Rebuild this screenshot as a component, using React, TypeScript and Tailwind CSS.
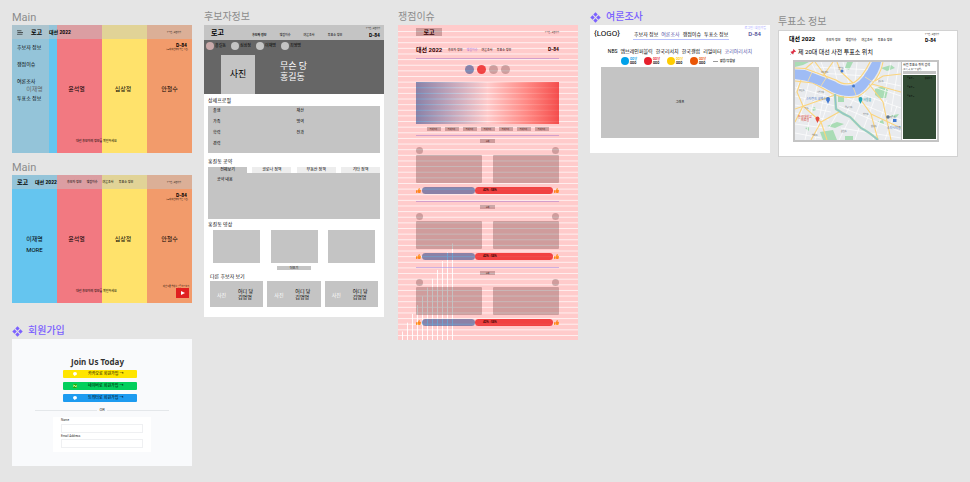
import type { ReactNode } from "react";
import { FaThumbsUp } from "react-icons/fa";

const NAV = ["후보자 정보", "쟁점이슈", "여론조사", "투표소 정보"];

function ComponentMark() {
  return (
    <svg viewBox="0 0 12 12" className="h-[11px] w-[11px] shrink-0 fill-[#7b61ff]" aria-hidden="true">
      <path d="M6 0.3 8.4 2.8 6 5.2 3.6 2.8Z M6 6.8 8.4 9.2 6 11.7 3.6 9.2Z M2.8 3.6 5.2 6 2.8 8.4 0.3 6Z M9.2 3.6 11.7 6 9.2 8.4 6.8 6Z" />
    </svg>
  );
}

function Title({ children, marked = false }: { children: ReactNode; marked?: boolean }) {
  return marked ? (
    <h2 className="flex h-4 items-center gap-[5px] text-[10px] font-medium whitespace-nowrap text-[#7b61ff]">
      <ComponentMark />
      {children}
    </h2>
  ) : (
    <h2 className="flex h-4 items-center text-[10px] whitespace-nowrap text-[#8c8c8c]">{children}</h2>
  );
}

function Auth() {
  return (
    <a href="#login" className="block text-[2px]">
      로그인 | 회원가입
    </a>
  );
}

const CANDIDATES = [
  { name: "이재명", bg: "bg-[#65c5ef]", pad: "" },
  { name: "윤석열", bg: "bg-[#f27981]", pad: "pr-[6px]" },
  { name: "심상정", bg: "bg-[#ffe26b]", pad: "pr-[3px]" },
  { name: "안철수", bg: "bg-[#f29b6b]", pad: "" },
];

function MainFrame({ open = false }: { open?: boolean }) {
  return (
    <section className="relative grid h-32 overflow-hidden text-black">
      <div className="col-start-1 row-start-1 grid grid-cols-4">
        {CANDIDATES.map((c) => (
          <div
            key={c.name}
            className={`flex flex-col items-center gap-[5px] pt-[61px] text-[6px] ${c.bg} ${c.pad}`}
          >
            <p>{c.name}</p>
            {!open && c.name === "이재명" && <a href="#more">MORE</a>}
          </div>
        ))}
      </div>
      {open && (
        <nav className="absolute inset-y-0 left-0 flex w-[37px] flex-col gap-3 bg-[#c4c4c4]/50 pt-[20px] pl-[5px] text-[5px] whitespace-nowrap">
          {NAV.map((n) => (
            <a key={n} href="#menu">
              {n}
            </a>
          ))}
        </nav>
      )}
      <div className="relative col-start-1 row-start-1 flex flex-col whitespace-nowrap">
        <header className="flex h-[14px] shrink-0 items-center bg-[#c4c4c4]/50 pr-[11px]">
          {open ? (
            <>
              <button aria-label="메뉴" className="ml-[5px] w-[14px]">
                <svg viewBox="0 0 12 10" className="h-[5px] w-[6px] stroke-[#222]" aria-hidden="true">
                  <path d="M0 1.5H9M1 5H12M0 8.5H11" strokeWidth="1.4" />
                </svg>
              </button>
              <b className="w-[18px] text-[6px]">로고</b>
              <b className="text-[5px]">대선 2022</b>
            </>
          ) : (
            <>
              <b className="ml-[5px] w-[18px] text-[6px]">로고</b>
              <b className="w-8 text-[5px]">대선 2022</b>
              <nav className="flex gap-[5px] pt-px text-[3px]">
                {NAV.map((n) => (
                  <a key={n} href="#menu">
                    {n}
                  </a>
                ))}
              </nav>
            </>
          )}
          <div className="ml-auto">
            <Auth />
          </div>
        </header>
        <div className="flex flex-col items-end pt-[4px] pr-[4px]">
          <b className="pr-px text-[5px]">D-84</b>
          <p className="text-[2px]">(20대 대선까지 남은 시간)</p>
        </div>
        <div className="mt-auto mb-[10px] flex pl-16">
          <p className="text-[3px]">대선 후보자의 정보를 확인하세요</p>
        </div>
      </div>
      {!open && (
        <div className="absolute right-[3px] bottom-[5px] flex flex-col items-end gap-px whitespace-nowrap">
          <p className="text-[2px]">대선 토론 영상을 유튜브로 보기</p>
          <button aria-label="영상 재생" className="flex h-[10px] w-[13px] items-center justify-center bg-[#e02020]">
            <svg viewBox="0 0 10 10" className="h-[4px] w-[4px] fill-white" aria-hidden="true">
              <path d="M0 0 10 5 0 10Z" />
            </svg>
          </button>
        </div>
      )}
    </section>
  );
}

function SignIcon({ kind }: { kind: string }) {
  return (
    <svg viewBox="0 0 10 10" className="h-[4px] w-[4px] shrink-0" aria-hidden="true">
      {kind === "naver" ? (
        <>
          <rect width="10" height="10" fill="#17a800" />
          <path d="M2 8V2L8 8V2" stroke="#d8ffb0" strokeWidth="2" fill="none" />
        </>
      ) : (
        <>
          <ellipse cx="5" cy="4.4" rx="5" ry="4.2" fill="#fff" />
          <path d="M3 7 3 10 6 8Z" fill="#fff" />
        </>
      )}
    </svg>
  );
}

const SIGN_UP = [
  { kind: "kakao", text: "카카오로 회원가입 →", style: "bg-[#ffe500]" },
  { kind: "naver", text: "네이버로 회원가입 →", style: "bg-[#03cf5d]" },
  { kind: "twitter", text: "트위터로 회원가입 →", style: "bg-[#1d9bf0]" },
];

function JoinFrame() {
  return (
    <section className="flex h-[127px] flex-col items-center bg-[#f9fafc] pt-[19px] whitespace-nowrap text-[#333]">
      <h1 className="mr-[9px] text-[8px] font-bold [font-family:'Noto_Sans',sans-serif]">Join Us Today</h1>
      <div className="mt-[4px] mr-[4px] flex w-[74px] flex-col gap-[4px]">
        {SIGN_UP.map((s) => (
          <button
            key={s.kind}
            className={`flex h-[8px] items-center gap-[11px] rounded-[1px] pl-[10px] text-[4px] text-black ${s.style}`}
          >
            <SignIcon kind={s.kind} />
            {s.text}
          </button>
        ))}
      </div>
      <div className="mt-[6px] flex w-[134px] items-center gap-[2px] text-[4px]">
        <hr className="grow border-[#e4e7ea]" />
        OR
        <hr className="grow border-[#e4e7ea]" />
      </div>
      <form className="mt-[5px] flex w-[98px] flex-col bg-white px-[8px] pt-[2px] pb-[4px] text-[3px]">
        <label htmlFor="join-name">Name</label>
        <input id="join-name" className="mt-[2px] h-[9px] w-full border border-[#eff0f2]" />
        <label htmlFor="join-email" className="mt-[2px]">
          Email Address
        </label>
        <input id="join-email" className="mt-px h-[9px] w-full border border-[#eff0f2]" />
      </form>
    </section>
  );
}

const PEOPLE = [
  { name: "홍길동", dot: "bg-[#c9a9a9]" },
  { name: "심상정", dot: "bg-[#c4c4c4]" },
  { name: "이재명", dot: "bg-[#c4c4c4]" },
  { name: "최영명", dot: "bg-[#c4c4c4]" },
];

function CandidateFrame() {
  return (
    <section className="flex h-[292px] flex-col bg-white whitespace-nowrap text-black">
      <header className="flex h-[15px] shrink-0 bg-[#c4c4c4] pr-[4px] pl-[7px]">
        <b className="w-[41px] pt-[5px] text-[7px]">로고</b>
        <nav className="flex gap-[13px] pt-[9px] text-[3px]">
          {NAV.map((n, i) => (
            <a key={n} href="#menu" className={i === 0 ? "font-bold" : ""}>
              {n}
            </a>
          ))}
        </nav>
        <div className="ml-auto flex flex-col items-end gap-[4px] pt-[2px]">
          <Auth />
          <b className="text-[5px]">D-84</b>
        </div>
      </header>
      <div className="flex h-[54px] shrink-0 flex-col bg-[#666]">
        <div className="flex pt-[2px] pl-[2px] text-[4px]">
          {PEOPLE.map((p) => (
            <div key={p.name} className="flex w-[25px] items-center gap-px">
              <span className={`size-[8px] shrink-0 rounded-full ${p.dot}`} />
              {p.name}
            </div>
          ))}
        </div>
        <div className="flex grow items-end pt-[5px] pl-[17px]">
          <div className="flex h-full w-[34px] items-center justify-center bg-[#c4c4c4] text-[9px]">사진</div>
          <div className="flex h-full flex-col gap-[2px] pt-[7px] pl-[25px] text-[9px] text-white">
            <p>무슨 당</p>
            <p>홍길동</p>
          </div>
        </div>
      </div>
      <div className="flex flex-col px-[4px] text-[5px]">
        <h3 className="pt-[4px]">상세프로필</h3>
        <div className="mt-[3px] grid h-[47px] grid-cols-2 content-start gap-y-[7px] bg-[#c4c4c4] pt-[3px] pl-[5px] text-[4px]">
          <p>출생</p>
          <p>재산</p>
          <p>가족</p>
          <p>병역</p>
          <p>학력</p>
          <p>전과</p>
          <p>경력</p>
        </div>
        <h3 className="pt-[6px]">홍길동 공약</h3>
        <div className="mt-[3px] flex justify-between text-[4px]">
          {["전체보기", "코로나 정책", "부동산 정책", "기타 정책"].map((t, i) => (
            <button key={t} className={`h-[6px] w-[39px] ${i === 0 ? "bg-[#c4c4c4]" : "bg-[#ededed]"}`}>
              {t}
            </button>
          ))}
        </div>
        <div className="h-[46px] bg-[#c4c4c4] pt-[5px] pl-[9px] text-[4px]">공약 내용</div>
        <h3 className="pt-[3px]">홍길동 영상</h3>
        <div className="mt-[3px] flex justify-between px-[5px]">
          {[0, 1, 2].map((n) => (
            <div key={n} className="h-[33px] w-[47px] bg-[#c4c4c4]" />
          ))}
        </div>
        <button className="mt-[3px] h-[4px] w-[34px] self-center bg-[#c4c4c4] text-[3px]">더보기</button>
        <h3 className="mt-[4px] pl-[2px]">다른 후보자 보기</h3>
      </div>
      <div className="mt-[2px] flex gap-[4px] px-[6px]">
        {[0, 1, 2].map((n) => (
          <div key={n} className="flex h-[26px] flex-1 items-center bg-[#c4c4c4] pl-[7px]">
            <span className="w-[21px] pt-[2px] text-[5px] text-white">사진</span>
            <p className="text-[5px] leading-[6px]">
              어디 당<br />
              김명명
            </p>
          </div>
        ))}
      </div>
    </section>
  );
}

function GridOverlay() {
  const rows = Array.from({ length: 55 }, (_, i) => 6 + i * 5.63);
  const bars = Array.from({ length: 11 }, (_, i) => ({ x: 4 + i * 5, y: 306.5 - i * 8.8 }));
  return (
    <svg
      viewBox="0 0 180 315"
      preserveAspectRatio="none"
      className="pointer-events-none absolute inset-0 h-full w-full"
      aria-hidden="true"
    >
      <mask id="gutters">
        <rect width="180" height="315" fill="#fff" />
        {rows.map((y) => (
          <rect key={y} y={y} width="180" height="0.9" fill="#444" />
        ))}
        {bars.map((b) => (
          <rect key={b.x} x={b.x} y={b.y} width="0.9" height={315 - b.y} fill="#000" />
        ))}
      </mask>
      <rect width="180" height="315" fill="#f00" opacity="0.2" mask="url(#gutters)" />
    </svg>
  );
}

function Vote() {
  return (
    <div className="flex flex-col">
      <button className="h-[4px] w-[15px] self-center bg-[#c4c4c4] text-[2px]">주제</button>
      <div className="mt-[4px] flex justify-between">
        <span className="size-[7px] rounded-full bg-[#c4c4c4]" />
        <span className="size-[7px] rounded-full bg-[#c4c4c4]" />
      </div>
      <div className="mt-px flex justify-between">
        <div className="h-7 w-[66px] rounded-[1px] bg-[#c4c4c4]" />
        <div className="h-7 w-[66px] rounded-[1px] bg-[#c4c4c4]" />
      </div>
      <div className="mt-[4px] flex items-center">
        <FaThumbsUp className="mr-px size-[5px] text-[#ffa726]" />
        <span className="h-[7px] w-[53px] rounded-full bg-[#6da3d2]" />
        <span className="flex h-[7px] grow items-center rounded-full bg-[#ee5252] pl-[8px] text-[3px] font-bold">
          42% : 58%
        </span>
        <FaThumbsUp className="ml-px size-[5px] text-[#ffa726]" />
      </div>
    </div>
  );
}

function IssueFrame() {
  return (
    <section className="relative h-[315px] bg-white pt-[3px] pr-[19px] pl-[18px] whitespace-nowrap text-black">
      <div className="flex items-center justify-between">
        <b className="flex h-[8px] w-[26px] items-center justify-center bg-[#c4c4c4] text-[6px]">로고</b>
        <Auth />
      </div>
      <header className="mt-[8px] flex h-[15px] items-center border-b border-[#c8c8ff] pb-[3px]">
        <b className="w-8 text-[6px]">대선 2022</b>
        <nav className="flex gap-[4px] pt-[2px] text-[3px]">
          {NAV.map((n, i) => (
            <a key={n} href="#menu" className={i === 1 ? "text-[#9a8cff]" : ""}>
              {n}
            </a>
          ))}
        </nav>
        <b className="ml-auto text-[5px]">D-84</b>
      </header>
      <div className="mt-[6px] flex justify-center gap-[3px]">
        <span className="size-[9px] rounded-full bg-[#6da3d2]" />
        <span className="size-[9px] rounded-full bg-[#ee5252]" />
        <span className="size-[9px] rounded-full bg-[#c4c4c4]" />
        <span className="size-[9px] rounded-full bg-[#c4c4c4]" />
      </div>
      <div className="mt-[8px] h-[42px] bg-linear-to-r from-[#6da3d2] via-white to-[#f26060]" />
      <div className="mt-[3px] flex justify-center gap-[4px]">
        {[0, 1, 2, 3, 4, 5, 6].map((n) => (
          <button key={n} className="h-[4px] w-[14px] bg-[#c4c4c4] text-[2px]">
            카테고리
          </button>
        ))}
      </div>
      <div className="mt-[4px] flex flex-col gap-[7px]">
        {[0, 1, 2].map((n) => (
          <div key={n} className="border-t border-[#c8c8ff] pt-[3px]">
            <Vote />
          </div>
        ))}
      </div>
      <GridOverlay />
    </section>
  );
}

const POLLSTERS = ["NBS", "엠브레인퍼블릭", "한국리서치", "한국갤럽", "리얼미터", "코리아리서치"];
const PARTIES = [
  { dot: "bg-[#00a1e9]", text: "text-[#00a1e9]" },
  { dot: "bg-[#e61e2b]", text: "text-[#e61e2b]" },
  { dot: "bg-[#ffcc00]", text: "text-[#ffcc00]" },
  { dot: "bg-[#ea5504]", text: "text-[#ea5504]" },
];

function PollFrame() {
  return (
    <section className="flex h-32 flex-col bg-white whitespace-nowrap text-black">
      <header className="flex h-[15px] pr-[4px] pl-[4px]">
        <p className="w-[39px] pt-[5px] text-[8px]">{"{LOGO}"}</p>
        <nav className="flex h-full items-end gap-[3px] border-b border-[#b9c2ff] px-px pb-[2px] text-[5px]">
          <a href="#menu">후보자 정보</a>
          <a href="#menu" className="text-[#5552a8]">
            여론조사
          </a>
          <a href="#menu">쟁점이슈</a>
          <a href="#menu">투표소 정보</a>
        </nav>
        <div className="ml-auto flex flex-col items-end gap-px pt-[2px]">
          <a href="#login" className="text-[3px] text-[#a9aaff]">
            로그인 | 회원가입
          </a>
          <b className="pr-[5px] text-[6px] font-medium text-[#4d4a96]">D-84</b>
        </div>
      </header>
      <div className="mt-[9px] flex justify-center gap-[3px] text-[5px]">
        {POLLSTERS.map((p, i) => (
          <a key={p} href="#poll" className={i === 5 ? "text-[#5552a8]" : ""}>
            {p}
          </a>
        ))}
      </div>
      <div className="mt-[3px] flex pl-[31px] text-[3px] font-bold">
        {PARTIES.map((p) => (
          <div key={p.dot} className="flex w-[23px] items-center gap-px">
            <span className={`size-[8px] shrink-0 rounded-full ${p.dot}`} />
            <p className="leading-[4px]">
              <span className={p.text}>OO당</span>
              <br />
              OOO
            </p>
          </div>
        ))}
        <div className="flex items-center gap-[2px]">
          <span className="h-px w-[5px] bg-[#999]" />
          없음/무응답
        </div>
      </div>
      <div className="mx-[11px] mt-[2px] flex h-[71px] items-center justify-center bg-[#c4c4c4] text-[3px]">그래프</div>
    </section>
  );
}

function MapDrawing() {
  const river = "M0 7.5 10 8 40 19.5Q49 26 60 22 68 18 77 0H86Q84 12 75 21 68 31 62 33 50 36 37 30 20 19 0 17Z";
  const stream = "M40 32 41 47Q48 52 55 55 60 60 66 66 74 70 83 78";
  return (
    <svg viewBox="0 0 106 78" preserveAspectRatio="none" className="h-full w-full" role="img" aria-label="지도">
      <rect width="106" height="78" fill="#e9ebee" />
      <g fill="#a9dcb5">
        <path d="M80 27 87 24 93 28 91 36 84 36 80 33Z" />
        <path d="M43 34H49V40H43Z M32 64 42 60 49 62 40 66Z M25 70 38 68 42 78H28Z M50 74H58V78H50Z M0 0H14L8 3 0 5Z M17 46 20 45 21 48 18 49Z M52 0H58L54 8 50 6Z M86 6 96 3 100 6 92 9Z M93 54 104 52 101 56Z M82 60 88 58 89 62Z M10 66 14 65 14 69Z" />
      </g>
      <g fill="none" stroke="#fff" strokeWidth="0.7">
        <path d="M0 25 38 36 M0 34 40 44 M0 43 36 50 M0 51 34 58 M0 62 30 66 M0 71 26 76 M5 19 0 30 M14 20 4 60 M22 24 10 78 M30 28 20 78 M36 32 26 62 M16 0 22 12 M26 0 32 16 M38 0 42 18 M48 0 54 22 M62 0 60 20 M20 5 78 8 M24 11 72 14 M88 0 82 20 M96 0 88 40 M104 0 96 50 M78 18 106 24 M76 24 106 34 M66 32 106 46 M52 36 106 58 M44 44 106 70 M60 34 50 54 M70 30 58 60 M80 36 68 68 M92 38 78 78 M102 44 90 78 M54 58 44 78 M64 66 60 78 M42 52 34 66 M46 66 106 76" />
      </g>
      <g fill="none" stroke="#fbd47c" strokeWidth="1.1">
        <path d="M0 6 10 6.5 41 18Q49 24 59 20.5 67 16 75 0 M0 19 18 21 37 31.5Q50 37.5 63 34.5 71 30 77 22 86 12 88 0" />
        <path d="M10 7 18 0 M28 14 38 0 M58 21 46 10 42 0 M33 17 20 0 M6 18 2 30 8 44 26 60 44 50 M0 47 20 40 40 33 M26 60 32 78 M8 44 0 60 M16 78 26 60 M63 34 76 52 83 78 M77 22 106 30 M76 52 106 66 M70 17 88 40 96 78 M106 12 88 14 80 19" />
      </g>
      <path d={river} fill="#9fbcf5" />
      <path d="M17 10 13 19 M31 16 26 24 M57 22 61 33 M70 15 78 20" stroke="#fbe0a0" strokeWidth="0.8" />
      <path d={stream} fill="none" stroke="#a3d8ae" strokeWidth="2.4" />
      <path d={stream} fill="none" stroke="#8bb9d8" strokeWidth="0.9" />
      <g fill="#4278d0">
        <circle cx="33" cy="37" r="2" />
        <path d="M31.2 38 33 42 34.8 38Z" />
        <circle cx="47" cy="9" r="1.5" />
        <circle cx="58.5" cy="24" r="1.5" />
        <rect x="98" y="57" width="3.5" height="3" />
      </g>
      <g fill="#22a5b5">
        <circle cx="65.5" cy="37" r="2" />
        <path d="M63.7 38 65.5 42 67.3 38Z" />
      </g>
      <g fill="#e34a3f">
        <circle cx="22.5" cy="56.5" r="2" />
        <path d="M20.7 57.5 22.5 61 24.3 57.5Z" />
      </g>
      <circle cx="93" cy="55" r="1.8" fill="#60748c" />
      <g fontSize="3" fill="#3d6fc4">
        <text x="11" y="38">스타필드 코엑스</text>
        <text x="92" y="67">스타시티몰</text>
        <text x="68" y="39" fill="#17909d">
          서울숲
        </text>
        <text x="3" y="56" fill="#d93a30">
          한국대학교
        </text>
        <text x="6" y="59" fill="#d93a30">
          의료원
        </text>
      </g>
      <g fontSize="2" fill="#555b66">
        <text x="26" y="11">이태원동</text>
        <text x="43" y="7">한남동</text>
        <text x="4" y="29">용산동</text>
        <text x="22" y="31">서빙고동</text>
        <text x="8" y="47">흑석동</text>
        <text x="50" y="46">압구정동</text>
        <text x="68" y="53">청담동</text>
        <text x="83" y="20">성수동</text>
        <text x="46" y="70">논현동</text>
        <text x="76" y="65">삼성동</text>
        <text x="17" y="74">방배동</text>
        <text x="95" y="56">자양동</text>
      </g>
    </svg>
  );
}

function StationFrame() {
  return (
    <section className="flex h-[127px] flex-col border border-[#d2d2d2] bg-white whitespace-nowrap text-black">
      <header className="flex h-[13px] pr-[18px] pl-[10px]">
        <b className="w-[37px] pt-[5px] text-[6px]">대선 2022</b>
        <nav className="flex gap-[5px] pt-[8px] text-[3px]">
          {NAV.map((n) => (
            <a key={n} href="#menu">
              {n}
            </a>
          ))}
        </nav>
        <div className="ml-auto flex flex-col items-end gap-[3px] pt-[2px]">
          <Auth />
          <b className="pr-[3px] text-[5px]">D-84</b>
        </div>
      </header>
      <h3 className="mt-[5px] flex items-center gap-[2px] pl-[11px] text-[6px]">
        <svg viewBox="0 0 12 12" className="h-[6px] w-[6px]" aria-hidden="true">
          <path d="M7 0 12 5 10.5 6 9.5 5.5 7 8 7 10 6 11 1 6 2 5 4 5 6.5 2.5 6 1.5Z" fill="#dd2e44" />
          <path d="M3.5 8.5 0.5 11.5" stroke="#889" strokeWidth="1.2" />
        </svg>
        제 20대 대선 사전 투표소 위치
      </h3>
      <div className="mt-[5px] mr-[18px] ml-[14px] flex h-[82px] gap-px bg-[#c4c4c4] p-[2px]">
        <div className="w-[106px] shrink-0">
          <MapDrawing />
        </div>
        <aside className="flex grow flex-col overflow-hidden bg-white text-[3px]">
          <label htmlFor="station" className="pt-[2px] pl-px">
            사전 투표소 위치 검색
          </label>
          <p className="pt-px pl-px text-[2px]">(도시, 구, 동으로 검색)</p>
          <input id="station" className="mx-px mt-px h-[3px] bg-[#c4c4c4]" />
          <ul className="m-px flex grow flex-col gap-[7px] bg-[#324b34] px-[4px] pt-[2px] text-[2px] text-black">
            <li className="flex justify-between">
              <span>투표소 1</span>
              <span>상세보기</span>
            </li>
            <li>투표소 2</li>
            <li>투표소 3</li>
          </ul>
        </aside>
      </div>
    </section>
  );
}

export default function App() {
  return (
    <main className="flex min-h-screen gap-2 bg-[#e5e5e5] px-3 leading-none [font-family:Roboto,'Noto_Sans_CJK_KR',sans-serif]">
      <div className="min-w-0 flex-1 pt-[9px]">
        <Title>
          <span className="text-[11px]">Main</span>
        </Title>
        <MainFrame open />
        <div className="mt-[6px]">
          <Title>
            <span className="text-[11px]">Main</span>
          </Title>
          <MainFrame />
        </div>
        <div className="mt-5">
          <Title marked>회원가입</Title>
          <JoinFrame />
        </div>
      </div>
      <div className="ml-1 min-w-0 flex-1 pt-[9px]">
        <Title>후보자정보</Title>
        <CandidateFrame />
      </div>
      <div className="ml-[6px] min-w-0 flex-1 pt-[9px]">
        <Title>쟁점이슈</Title>
        <IssueFrame />
      </div>
      <div className="ml-1 min-w-0 flex-1 pt-[9px]">
        <Title marked>여론조사</Title>
        <PollFrame />
      </div>
      <div className="min-w-0 flex-1 pt-[14px]">
        <Title>투표소 정보</Title>
        <StationFrame />
      </div>
    </main>
  );
}
